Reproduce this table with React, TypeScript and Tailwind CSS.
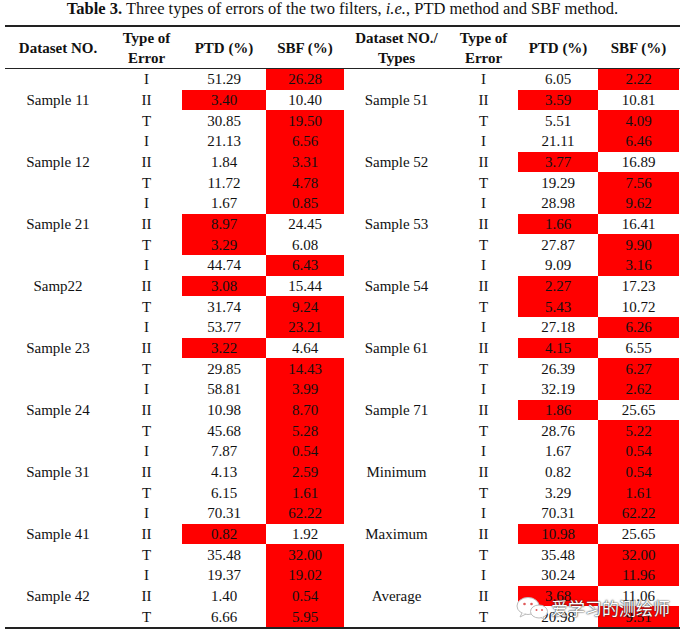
const left = [
  { name: "Sample 11", rows: [["51.29", "26.28", "s"], ["3.40", "10.40", "p"], ["30.85", "19.50", "s"]] },
  { name: "Sample 12", rows: [["21.13", "6.56", "s"], ["1.84", "3.31", "s"], ["11.72", "4.78", "s"]] },
  { name: "Sample 21", rows: [["1.67", "0.85", "s"], ["8.97", "24.45", "p"], ["3.29", "6.08", "p"]] },
  { name: "Samp22", rows: [["44.74", "6.43", "s"], ["3.08", "15.44", "p"], ["31.74", "9.24", "s"]] },
  { name: "Sample 23", rows: [["53.77", "23.21", "s"], ["3.22", "4.64", "p"], ["29.85", "14.43", "s"]] },
  { name: "Sample 24", rows: [["58.81", "3.99", "s"], ["10.98", "8.70", "s"], ["45.68", "5.28", "s"]] },
  { name: "Sample 31", rows: [["7.87", "0.54", "s"], ["4.13", "2.59", "s"], ["6.15", "1.61", "s"]] },
  { name: "Sample 41", rows: [["70.31", "62.22", "s"], ["0.82", "1.92", "p"], ["35.48", "32.00", "s"]] },
  { name: "Sample 42", rows: [["19.37", "19.02", "s"], ["1.40", "0.54", "s"], ["6.66", "5.95", "s"]] },
];

const right = [
  { name: "Sample 51", rows: [["6.05", "2.22", "s"], ["3.59", "10.81", "p"], ["5.51", "4.09", "s"]] },
  { name: "Sample 52", rows: [["21.11", "6.46", "s"], ["3.77", "16.89", "p"], ["19.29", "7.56", "s"]] },
  { name: "Sample 53", rows: [["28.98", "9.62", "s"], ["1.66", "16.41", "p"], ["27.87", "9.90", "s"]] },
  { name: "Sample 54", rows: [["9.09", "3.16", "s"], ["2.27", "17.23", "p"], ["5.43", "10.72", "p"]] },
  { name: "Sample 61", rows: [["27.18", "6.26", "s"], ["4.15", "6.55", "p"], ["26.39", "6.27", "s"]] },
  { name: "Sample 71", rows: [["32.19", "2.62", "s"], ["1.86", "25.65", "p"], ["28.76", "5.22", "s"]] },
  { name: "Minimum", rows: [["1.67", "0.54", "s"], ["0.82", "0.54", "s"], ["3.29", "1.61", "s"]] },
  { name: "Maximum", rows: [["70.31", "62.22", "s"], ["10.98", "25.65", "p"], ["35.48", "32.00", "s"]] },
  { name: "Average", rows: [["30.24", "11.96", "s"], ["3.68", "11.06", "p"], ["20.98", "9.51", "s"]] },
];

const types = ["I", "II", "T"];
const cols = "grid grid-cols-[106px_71px_84px_78px_105px_69px_80px_81px]";

function Cell({ value, red }: { value: string; red: boolean }) {
  return (
    <div className={`h-[20.68px] flex items-center justify-center ${red ? "bg-[#ff0000]" : ""}`}>
      {value}
    </div>
  );
}

function WeChatMark() {
  return (
    <svg width="34" height="24" viewBox="0 0 34 24">
      <ellipse cx="12" cy="10" rx="11" ry="8.5" fill="#fff" stroke="#bbb" strokeWidth="1" />
      <path d="M6 17 L4 21 L10 18" fill="#fff" stroke="#bbb" strokeWidth="1" />
      <circle cx="8.5" cy="8" r="1.3" fill="#e05a5a" />
      <circle cx="15.5" cy="8" r="1.3" fill="#e05a5a" />
      <ellipse cx="23" cy="15.5" rx="8.5" ry="6.5" fill="#fff" stroke="#bbb" strokeWidth="1" />
      <path d="M27 21 L29 23.5 L25 21.5" fill="#fff" stroke="#bbb" strokeWidth="1" />
      <circle cx="20.5" cy="14" r="1" fill="#e05a5a" />
      <circle cx="26" cy="14" r="1" fill="#e05a5a" />
    </svg>
  );
}

export default function App() {
  return (
    <div className="relative w-[692px] h-[640px] bg-white text-[#111] font-['Liberation_Serif','Times_New_Roman',serif] overflow-hidden">
      <div className="w-[675px] ml-[5px]">
        <p className="text-center text-[16.5px] leading-[18px] whitespace-nowrap">
          <span className="font-bold">Table 3.</span> Three types of errors of the two filters,{" "}
          <i>i.e.</i>, PTD method and SBF method.
        </p>

        <div className="mt-[7px] border-t-2 border-b-2 border-[#222]">
          <div className={`${cols} h-[42px] border-b border-[#222] font-bold text-[15px] leading-[20px] text-center items-center`}>
            <div>Dataset NO.</div>
            <div>
              Type of
              <br />
              Error
            </div>
            <div>PTD (%)</div>
            <div>SBF (%)</div>
            <div>
              Dataset NO./
              <br />
              Types
            </div>
            <div>
              Type of
              <br />
              Error
            </div>
            <div>PTD (%)</div>
            <div>SBF (%)</div>
          </div>

          <div className="text-[15px] leading-[20px]">
            {left.map((group, g) =>
              group.rows.map((row, i) => {
                const r = right[g].rows[i];
                return (
                  <div key={`${g}-${i}`} className={cols}>
                    <div className="h-[20.68px] flex items-center justify-center">
                      {i === 1 ? group.name : ""}
                    </div>
                    <Cell value={types[i]} red={false} />
                    <Cell value={row[0]} red={row[2] === "p"} />
                    <Cell value={row[1]} red={row[2] === "s"} />
                    <div className="h-[20.68px] flex items-center justify-center">
                      {i === 1 ? right[g].name : ""}
                    </div>
                    <Cell value={types[i]} red={false} />
                    <Cell value={r[0]} red={r[2] === "p"} />
                    <Cell value={r[1]} red={r[2] === "s"} />
                  </div>
                );
              })
            )}
          </div>
        </div>
      </div>

      {/* watermark */}
      <div className="absolute left-[516px] top-[596px] flex items-center gap-[1px]">
        <WeChatMark />
        <span className="text-white text-[17px] leading-[20px] font-['Noto_Sans_CJK_SC',sans-serif] [text-shadow:0_0_2px_#333,0_0_1px_#333]">
          爱学习的测绘师
        </span>
      </div>
    </div>
  );
}
